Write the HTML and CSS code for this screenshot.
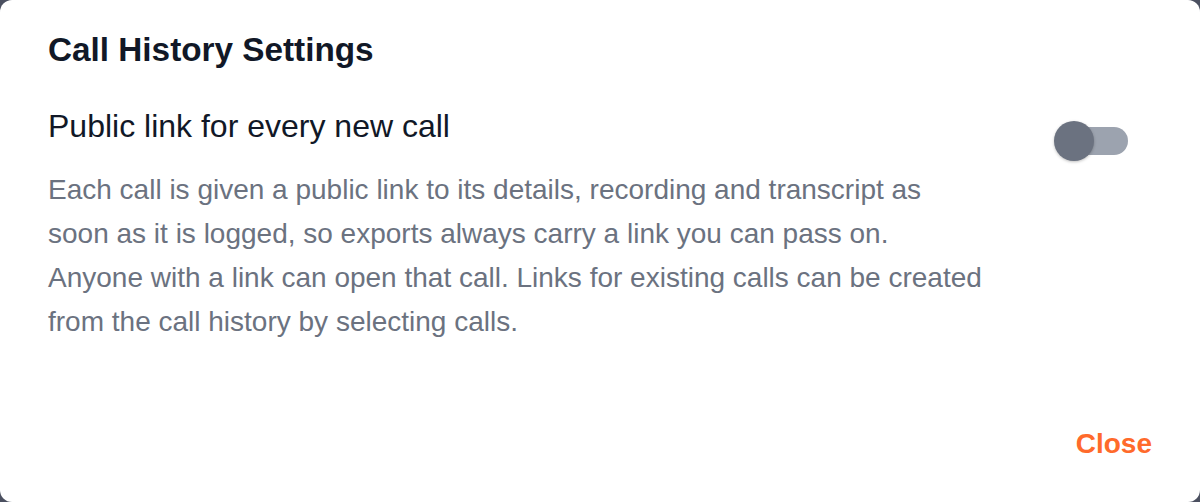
FILE: index.html
```html
<!DOCTYPE html>
<html>
<head>
<meta charset="utf-8">
<link rel="stylesheet" href="styles.css">
</head>
<body>
<div class="dialog">
  <h1 class="title">Call History Settings</h1>
  <div class="setting">
    <div class="setting-text">
      <h2 class="setting-name">Public link for every new call</h2>
      <p class="setting-desc">Each call is given a public link to its details, recording and transcript as soon as it is logged, so exports always carry a link you can pass on. Anyone with a link can open that call. Links for existing calls can be created from the call history by selecting calls.</p>
    </div>
    <div class="toggle" role="switch" aria-checked="false">
      <span class="track"></span>
      <span class="knob"></span>
    </div>
  </div>
  <div class="actions">
    <button class="close">Close</button>
  </div>
</div>
</body>
</html>
```
FILE: styles.css
```css
html, body {
  margin: 0;
  padding: 0;
  height: 100%;
  background: #4b5060;
}
body {
  font-family: "Liberation Sans", Arial, sans-serif;
}
.dialog {
  box-sizing: border-box;
  height: 502px;
  background: #ffffff;
  border-radius: 12px;
  padding: 30px 48px 42px 48px;
  display: flex;
  flex-direction: column;
}
.title {
  margin: 0;
  font-size: 33.3px;
  font-weight: 700;
  color: #111827;
  line-height: 40px;
}
.setting {
  display: flex;
  justify-content: space-between;
  align-items: flex-start;
  margin-top: 36px;
}
.setting-text {
  width: 938px;
}
.setting-name {
  margin: 0;
  font-size: 32px;
  font-weight: 400;
  color: #111827;
  line-height: 40px;
}
.setting-desc {
  margin: 22px 0 0 0;
  font-size: 28px;
  line-height: 44px;
  color: #6b7280;
}
.toggle {
  position: relative;
  width: 74px;
  height: 40px;
  margin-top: 15px;
  margin-right: 24px;
  flex: none;
}
.track {
  position: absolute;
  left: 2px;
  right: 0;
  top: 6px;
  height: 28px;
  border-radius: 14px;
  background: #9ca3af;
}
.knob {
  position: absolute;
  left: 0;
  top: 0;
  width: 40px;
  height: 40px;
  border-radius: 50%;
  background: #6b7280;
  box-shadow: 0 1px 3px rgba(0,0,0,0.25);
}
.actions {
  margin-top: auto;
  display: flex;
  justify-content: flex-end;
}
.close {
  border: none;
  background: none;
  padding: 0;
  font-family: "Liberation Sans", Arial, sans-serif;
  font-size: 28px;
  font-weight: 700;
  color: #ff6a2b;
  cursor: pointer;
}
```
